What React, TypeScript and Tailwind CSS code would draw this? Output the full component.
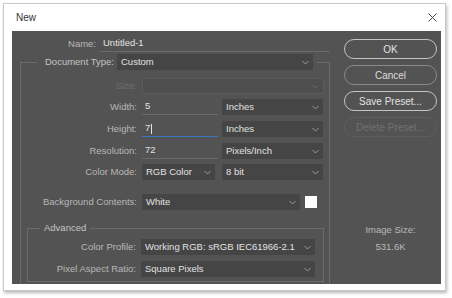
import type { ReactNode } from 'react';

const font = { fontFamily: '"Liberation Sans", Arial, sans-serif' };

function Chevron({ dim = false }: { dim?: boolean }) {
  return (
    <svg width="7" height="5" viewBox="0 0 7 5" className="shrink-0">
      <path d="M0.5 1 L3.5 4 L6.5 1" fill="none" stroke={dim ? '#6a6a6a' : '#9c9c9c'} strokeWidth="1" />
    </svg>
  );
}

function Select({ value, width, disabled = false }: { value?: string; width: string; disabled?: boolean }) {
  return (
    <div
      className={`${width} flex h-[16px] items-center justify-between pl-[4px] pr-[4px] ${
        disabled ? 'border border-[#5c5c5c] bg-[#4e4e4e]' : 'bg-[#454545]'
      }`}
    >
      <span className="whitespace-nowrap text-[#e2e2e2]">{value}</span>
      <Chevron dim={disabled} />
    </div>
  );
}

function Row({ label, labelWidth, children, className = '', disabled = false }: {
  label: string;
  labelWidth: string;
  children: ReactNode;
  className?: string;
  disabled?: boolean;
}) {
  return (
    <div className={`flex h-[16px] items-center ${className}`}>
      <span className={`${labelWidth} shrink-0 text-right ${disabled ? 'text-[#6e6e6e]' : 'text-[#b8b8b8]'}`}>
        {label}
      </span>
      <div className="ml-[5px] flex items-center gap-[4px]">{children}</div>
    </div>
  );
}

function TextField({ value, width, focused = false }: { value: string; width: string; focused?: boolean }) {
  return (
    <div
      className={`${width} flex h-[16px] items-center border-b pl-[3px] text-[#e2e2e2] ${
        focused ? 'border-[#3b76c0]' : 'border-[#6a6a6a]'
      }`}
    >
      {value}
      {focused && <span className="ml-[1px] inline-block h-[10px] w-px bg-[#e2e2e2]" />}
    </div>
  );
}

function PillButton({ children, primary = false, disabled = false }: { children: ReactNode; primary?: boolean; disabled?: boolean }) {
  return (
    <div
      className={`flex h-[20px] w-[93px] items-center justify-center rounded-full border text-[10px] ${
        disabled
          ? 'border-[#5e5e5e] text-[#717171]'
          : primary
            ? 'border-[#c4c4c4] text-[#e2e2e2]'
            : 'border-[#8a8a8a] text-[#dedede]'
      }`}
    >
      {children}
    </div>
  );
}

export default function App() {
  return (
    <div className="h-[298px] w-[452px] bg-white pl-[3px] pt-[3px]" style={font}>
      <div className="flex h-[288px] w-[443px] flex-col border border-[#c9c9c9] bg-white shadow-[1px_2px_3px_rgba(0,0,0,0.28)]">
        <div className="flex h-[27px] shrink-0 items-center justify-between pl-[12px] pr-[8px]">
          <span className="text-[10px] text-[#333]">New</span>
          <svg width="9" height="9" viewBox="0 0 9 9">
            <path d="M0.5 0.5 L8.5 8.5 M8.5 0.5 L0.5 8.5" stroke="#444" strokeWidth="1" />
          </svg>
        </div>
        <div className="ml-[8px] mr-[4px] flex h-[253px] overflow-hidden bg-[#535353] text-[9.5px]">
          <div className="w-[318px] shrink-0 pt-[5px]">
            <div className="flex h-[16px] items-center">
              <span className="w-[84px] shrink-0 text-right text-[#b8b8b8]">Name:</span>
              <div className="ml-[4px] flex h-[16px] w-[232px] items-center border-b border-[#6a6a6a] pl-[3px] text-[#e2e2e2]">
                Untitled-1
              </div>
            </div>

            <fieldset className="ml-[8px] mt-[2px] w-[310px] border border-b-0 border-[#6b6b6b] pb-[3px]">
              <legend className="ml-[16px] flex h-[16px] items-center px-[4px]">
                <span className="w-[73px] text-right text-[#c4c4c4]">Document Type:</span>
                <div className="ml-[3px]">
                  <Select value="Custom" width="w-[196px]" />
                </div>
              </legend>

              <Row label="Size:" labelWidth="w-[116px]" disabled className="mt-[8px]">
                <Select width="w-[182px]" disabled />
              </Row>
              <Row label="Width:" labelWidth="w-[116px]" className="mt-[5px]">
                <TextField value="5" width="w-[76px]" />
                <Select value="Inches" width="w-[101px]" />
              </Row>
              <Row label="Height:" labelWidth="w-[116px]" className="mt-[6px]">
                <TextField value="7" width="w-[76px]" focused />
                <Select value="Inches" width="w-[101px]" />
              </Row>
              <Row label="Resolution:" labelWidth="w-[116px]" className="mt-[6px]">
                <TextField value="72" width="w-[76px]" />
                <Select value="Pixels/Inch" width="w-[101px]" />
              </Row>
              <Row label="Color Mode:" labelWidth="w-[116px]" className="mt-[5px]">
                <Select value="RGB Color" width="w-[73px]" />
                <div className="ml-[3px]">
                  <Select value="8 bit" width="w-[101px]" />
                </div>
              </Row>
              <Row label="Background Contents:" labelWidth="w-[116px]" className="mt-[14px]">
                <Select value="White" width="w-[158px]" />
                <div className="ml-[1px] h-[12px] w-[12px] bg-white" />
              </Row>

              <fieldset className="ml-[6px] mt-[10px] w-[297px] border border-[#6b6b6b] pb-[4px]">
                <legend className="ml-[12px] flex h-[16px] items-center px-[4px] text-[#c4c4c4]">Advanced</legend>
                <Row label="Color Profile:" labelWidth="w-[108px]" className="mt-[3px]">
                  <Select value="Working RGB:  sRGB IEC61966-2.1" width="w-[174px]" />
                </Row>
                <Row label="Pixel Aspect Ratio:" labelWidth="w-[108px]" className="mt-[6px]">
                  <Select value="Square Pixels" width="w-[174px]" />
                </Row>
              </fieldset>
            </fieldset>
          </div>

          <div className="flex flex-col pl-[14px] pt-[8px]">
            <div className="flex flex-col gap-[6px]">
              <PillButton primary>OK</PillButton>
              <PillButton>Cancel</PillButton>
              <PillButton primary>Save Preset...</PillButton>
              <PillButton disabled>Delete Preset...</PillButton>
            </div>
            <div className="mt-[87px] w-[93px] text-center leading-[12px] text-[#b8b8b8]">Image Size:</div>
            <div className="mt-[5px] w-[93px] text-center leading-[12px] text-[#b8b8b8]">531.6K</div>
          </div>
        </div>
      </div>
    </div>
  );
}
